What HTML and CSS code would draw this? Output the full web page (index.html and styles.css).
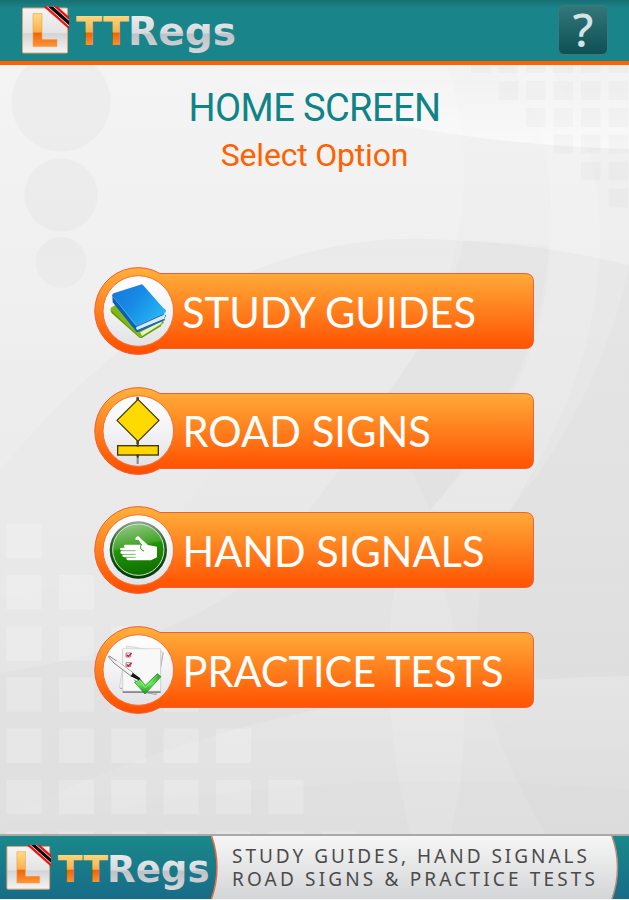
FILE: index.html
```html
<!DOCTYPE html>
<html lang="en">
  <head>
    <meta charset="utf-8">
    <title>TTRegs</title>
    <link rel="stylesheet" href="styles.css">
  </head>
  <body>
    <!-- shared gradients and symbols -->
    <svg class="defs" width="0" height="0">
      <defs>
        <linearGradient id="gold" gradientUnits="userSpaceOnUse" x1="0" y1="8" x2="0" y2="39">
          <stop offset="0" stop-color="#fdd87f" />
          <stop offset="0.53" stop-color="#f9b04c" />
          <stop offset="0.57" stop-color="#ec6608" />
          <stop offset="1" stop-color="#ff9537" />
        </linearGradient>
        <linearGradient id="silver" gradientUnits="userSpaceOnUse" x1="0" y1="8" x2="0" y2="46">
          <stop offset="0" stop-color="#e9ebed" />
          <stop offset="0.45" stop-color="#d8dadd" />
          <stop offset="0.5" stop-color="#bfc2c7" />
          <stop offset="1" stop-color="#d6d7da" />
        </linearGradient>
        <linearGradient id="plate" x1="0" y1="0" x2="0" y2="1">
          <stop offset="0" stop-color="#f4f4f4" />
          <stop offset="0.55" stop-color="#e4e4e4" />
          <stop offset="0.57" stop-color="#d3d4d6" />
          <stop offset="1" stop-color="#f4f4f4" />
        </linearGradient>
        <linearGradient id="orange" x1="0" y1="0" x2="0" y2="1">
          <stop offset="0" stop-color="#ffb03a" />
          <stop offset="0.15" stop-color="#ffa233" />
          <stop offset="0.85" stop-color="#ff5a06" />
          <stop offset="1" stop-color="#ff4e00" />
        </linearGradient>
        <linearGradient id="disc" x1="0" y1="0" x2="0" y2="1">
          <stop offset="0" stop-color="#ffffff" />
          <stop offset="0.5" stop-color="#f3f3f5" />
          <stop offset="1" stop-color="#e2e2e4" />
        </linearGradient>
        <linearGradient id="cover" x1="0" y1="0" x2="1" y2="0.6">
          <stop offset="0" stop-color="#1577d8" />
          <stop offset="0.5" stop-color="#188be6" />
          <stop offset="1" stop-color="#25b5f2" />
        </linearGradient>
        <linearGradient id="green" x1="0" y1="0" x2="0.2" y2="1">
          <stop offset="0" stop-color="#9fcc92" />
          <stop offset="0.48" stop-color="#43a42a" />
          <stop offset="0.52" stop-color="#219306" />
          <stop offset="1" stop-color="#117200" />
        </linearGradient>
        <linearGradient id="rim" x1="0" y1="0" x2="0" y2="1">
          <stop offset="0" stop-color="#8fa892" />
          <stop offset="0.4" stop-color="#1d5a24" />
          <stop offset="1" stop-color="#003d05" />
        </linearGradient>
        <linearGradient id="tick" x1="0" y1="0" x2="0" y2="1">
          <stop offset="0" stop-color="#1d9c1d" />
          <stop offset="0.5" stop-color="#6ae45c" />
          <stop offset="1" stop-color="#17931a" />
        </linearGradient>
        <linearGradient id="shine" x1="0" y1="0" x2="0" y2="1">
          <stop offset="0" stop-color="#fff" stop-opacity="0" />
          <stop offset="1" stop-color="#fff" stop-opacity="0.6" />
        </linearGradient>
        <linearGradient id="dome" x1="0" y1="0" x2="0" y2="1">
          <stop offset="0" stop-color="#000" stop-opacity="0.024" />
          <stop offset="1" stop-color="#000" stop-opacity="0" />
        </linearGradient>
        <linearGradient id="sweep" x1="0" y1="0" x2="0" y2="1">
          <stop offset="0" stop-color="#fff" stop-opacity="0.2" />
          <stop offset="1" stop-color="#fff" stop-opacity="0" />
        </linearGradient>
        <linearGradient id="teal" x1="0" y1="0" x2="0" y2="1">
          <stop offset="0" stop-color="#1a888a" />
          <stop offset="1" stop-color="#176c88" />
        </linearGradient>
        <linearGradient id="panel" x1="0" y1="0" x2="0" y2="1">
          <stop offset="0" stop-color="#f6f6f6" />
          <stop offset="1" stop-color="#d4d5d7" />
        </linearGradient>
        <clipPath id="plate-clip"><rect x="0" y="-1" width="47" height="47" /></clipPath>
      </defs>
      <symbol id="logo" viewBox="-1 -7.5 216 61" overflow="visible">
        <rect x="0.5" y="0.5" width="45" height="45" rx="1" fill="url(#plate)" stroke="#dda36f" />
        <path d="M11 6h9v26h15v7h-24z" fill="url(#gold)" stroke="#f6a04a" stroke-width="0.6" />
        <g clip-path="url(#plate-clip)">
          <path d="M25 -4L52 20" stroke="#f01010" stroke-width="9.4" />
          <path d="M25 -4L52 20" stroke="#fff" stroke-width="4.6" />
          <path d="M25 -4L52 20" stroke="#080808" stroke-width="3.4" />
        </g>
        <text class="logo-text" x="54" y="37.5" textLength="53" lengthAdjust="spacingAndGlyphs" fill="url(#gold)">TT</text>
        <text class="logo-text" x="106" y="37.5" textLength="108" lengthAdjust="spacingAndGlyphs" fill="url(#silver)">Regs</text>
      </symbol>
      <symbol id="button-shape" viewBox="0 0 440 88">
        <path d="M66 6.500H431q8.500 0 8.500 8.500V73q0 8.500-8.500 8.500H66A43.400 43.400 0 1 1 66 6.500z" fill="url(#orange)" stroke="#ee6038" />
        <circle cx="44.300" cy="44" r="35.300" fill="url(#disc)" stroke="#f4703a" />
      </symbol>
    </svg>

    <header class="topbar">
      <svg class="topbar-logo" width="216" height="61"><use href="#logo" /></svg>
      <a class="help" href="#">?</a>
    </header>

    <main class="home">
      <svg class="backdrop" viewBox="0 65 629 769" width="629" height="769">
        <!-- large curves -->
        <path d="M0 65H448Q465 120 464 180Q460 300 388 392Q320 510 240 588Q150 650 0 673z" fill="#fff" opacity="0.16" />
        <path d="M0 243Q75 250 120 275Q200 290 240 400Q200 560 0 600z" fill="#fff" opacity="0.05" />
        <path d="M205 65C300 108 440 144 629 149V65z" fill="url(#shine)" />
        <path d="M512 65Q555 145 550 220Q550 370 430 510H510Q600 370 600 240Q600 140 548 65z" fill="#fff" opacity="0.16" />
        <path d="M0 470Q200 230 430 239Q540 243 629 265V620H0z" fill="url(#dome)" />
        <path d="M464 240Q445 320 388 392Q400 450 430 510Q510 430 540 320Q550 280 549 245z" fill="#000" opacity="0.012" />
        <path d="M415 510Q365 640 410 834H450Q490 680 415 510z" fill="#fff" opacity="0.12" />
        <path d="M510 510Q430 640 545 834H629V265Q600 400 510 510z" fill="#000" opacity="0.01" />
        <path d="M0 820C180 730 380 680 629 676V790Q300 760 0 834z" fill="url(#sweep)" />
        <!-- circles -->
        <g fill="#000" opacity="0.02">
          <circle cx="61" cy="102" r="49.500" />
          <circle cx="61" cy="195" r="36.500" />
          <circle cx="61" cy="262.500" r="25.500" />
        </g>
        <!-- squares, top right -->
        <g fill="none" stroke="#000" stroke-opacity="0.018" stroke-width="19" stroke-dasharray="19.500 8">
          <path d="M471 63.500H629" />
          <path d="M498.500 90.500H629" />
          <path d="M526 117.500H629" />
          <path d="M553.500 144H629" />
          <path d="M581 171H629" />
          <path d="M608.500 198H629" />
        </g>
        <!-- squares, bottom left -->
        <g fill="none" stroke="#fff" stroke-opacity="0.21" stroke-width="34.500" stroke-dasharray="35 17.400">
          <path d="M6.500 541H42" />
          <path d="M6.500 592.200H94" />
          <path d="M6.500 643.400H146" />
          <path d="M6.500 694.600H199" />
          <path d="M6.500 745.800H251" />
          <path d="M6.500 797H304" />
          <path d="M6.500 848.700H356" />
        </g>
      </svg>

      <h1>HOME SCREEN</h1>
      <h2>Select Option</h2>

      <nav class="menu">
        <a href="#">
          <svg width="440" height="88">
            <use href="#button-shape" />
            <g transform="translate(-9 -6.700) scale(0.3333)">
              <path d="M78 142q-4 7 2 17l84 74q6 1 9-2l64-43-6-16-60-50-70 6z" fill="#83b616" />
              <path d="M78 150l82 76 6 8-84-75z" fill="#5f960a" />
              <path d="M166 216l64-34-1 8-58 37z" fill="#e8f3c3" />
              <path d="M164 233l64-40 1 4-59 36z" fill="#5f960a" />
              <path d="M82 104l1 22 67 83q2 6 6 6l84-42 3-8-8-4 7-12-60-42z" fill="#0e5fb4" />
              <path d="M154 200l86-38v6l-3 8-80 33q-6-5-3-9z" fill="#dce9f3" />
              <path d="M155 211l83-36 3 4-82 37z" fill="#1269be" />
              <path d="M82 104q0-3 4-5l80-26q4-2 8 1l68 77q3 4-2 6l-84 38q-4 2-7-2z" fill="url(#cover)" />
              <path d="M84 109l68 84 5 2 83-37" fill="none" stroke="#54c2f4" stroke-width="2" />
            </g>
            <text class="label" x="88" y="60.700" textLength="294" lengthAdjust="spacingAndGlyphs">STUDY GUIDES</text>
          </svg>
        </a>
        <a href="#">
          <svg width="440" height="88">
            <use href="#button-shape" />
            <g transform="translate(-9 -6.300) scale(0.3333)">
              <path d="M158 48V250" stroke="#858585" stroke-width="6" />
              <path d="M158 180V232" stroke="#444" stroke-width="4" />
              <path d="M159 56l63 63-63 63-63-63z" fill="#ffda00" stroke="#40370b" stroke-width="4" stroke-linejoin="round" />
              <rect x="98" y="195" width="122" height="28" fill="#ffd500" stroke="#40370b" stroke-width="4" />
              <path d="M158 50v9M158 181v9M158 192v6M158 221v7" stroke="#454016" stroke-width="7" />
            </g>
            <text class="label" x="88.500" y="60.200" textLength="248.500" lengthAdjust="spacingAndGlyphs">ROAD SIGNS</text>
          </svg>
        </a>
        <a href="#">
          <svg width="440" height="88">
            <use href="#button-shape" />
            <g transform="translate(-9 -6.300) scale(0.3333)">
              <circle cx="160" cy="151" r="86" fill="url(#rim)" />
              <circle cx="160" cy="150" r="77" fill="url(#green)" stroke="#d3e4cf" stroke-width="3" />
              <path d="M151 120q0-10 9-10 4 1 6 6l23 20 27 5v32l-18 9h-69q-5-1-5-5t5-4h-11q-6-1-6-5t6-4h-6q-6-1-6-6t6-5h-1q-6-1-6-5t6-4h10q-4 0-4-5t5-4h50q-7-6-11-15z" fill="#fff" />
              <path d="M108 153h44M114 164h38M124 173h28" stroke="#3b9c25" stroke-width="2" />
              <path d="M169 134q-7 15 8 20" fill="none" stroke="#2d951a" stroke-width="3" />
            </g>
            <text class="label" x="88.500" y="60.700" textLength="302" lengthAdjust="spacingAndGlyphs">HAND SIGNALS</text>
          </svg>
        </a>
        <a href="#">
          <svg width="440" height="88">
            <use href="#button-shape" />
            <g transform="translate(-9 -5.300) scale(0.3333)">
              <path d="M126 78l110 18-22 127-109-19z" fill="#9a9a9a" />
              <path d="M125 76l109 18-22 125-109-18z" fill="#eee" stroke="#c9c9c9" stroke-width="2" />
              <path d="M113 88h114v129H113z" fill="#888" />
              <path d="M113 84h114v127H113z" fill="#f8f8f8" stroke="#cfcfcf" stroke-width="2" />
              <path d="M123 97h14v12h-14zM123 126h14v12h-14z" fill="#fff" stroke="#846" stroke-width="2" />
              <path d="M125 102l5 5 10-10M125 131l5 5 10-10" fill="none" stroke="#d01717" stroke-width="4" />
              <path d="M70 108q1-3 5-1l70 50-6 10-52-40z" fill="#efefef" stroke="#8a8a8a" stroke-width="3" />
              <path d="M94 122l46 35" stroke="#fff" stroke-width="4" />
              <path d="M144 157l21 15q4 5-1 8l-27-13z" fill="#151515" />
              <path d="M148 177l17 20 9-10" fill="none" stroke="#777" stroke-width="3" />
              <path d="M149 185l17-9 15 18 36-35 11 9-48 52z" fill="url(#tick)" stroke="#168d1b" stroke-width="2" stroke-linejoin="round" />
              <path d="M153 186l12-6 16 21 36-37" fill="none" stroke="#a5f399" stroke-width="2" />
            </g>
            <text class="label" x="88.500" y="60.700" textLength="321" lengthAdjust="spacingAndGlyphs">PRACTICE TESTS</text>
          </svg>
        </a>
      </nav>
    </main>

    <footer class="banner">
      <svg width="629" height="63" viewBox="0 0 629 63">
        <rect width="629" height="63" fill="url(#teal)" />
        <path d="M211 0Q223 31 211 63H611.500Q624 31 611.500 0z" fill="url(#panel)" />
        <path d="M211.500 0Q222.500 31 211.500 63" fill="none" stroke="#ec6a3a" stroke-width="1.500" />
        <path d="M612 0Q623 31 612 63" fill="none" stroke="#b98c78" stroke-width="1.500" />
        <use href="#logo" x="5.500" y="2.800" width="205" height="58" />
        <text class="banner-text" x="232" y="26.500" textLength="355">STUDY GUIDES, HAND SIGNALS</text>
        <text class="banner-text" x="232" y="50" textLength="363">ROAD SIGNS &amp; PRACTICE TESTS</text>
      </svg>
    </footer>
  </body>
</html>
```
FILE: styles.css
```css
body {
  margin: 0;
  width: 629px;
  height: 900px;
  overflow: hidden;
  display: flex;
  flex-direction: column;
  font-family: Roboto, sans-serif;
  background-color: #f4f4f4;
}

svg {
  display: block;
  overflow: visible;
}

.defs {
  position: absolute;
}

.topbar {
  box-sizing: border-box;
  height: 65px;
  padding: 0 21px;
  display: flex;
  justify-content: space-between;
  background: linear-gradient(#176f72, #19858a 8px);
  border-bottom: 4px solid #ff6100;
}

.logo-text {
  font-family: "DejaVu Sans", sans-serif;
  font-weight: bold;
  font-size: 39.5px;
}

.help {
  box-sizing: border-box;
  width: 50px;
  height: 50px;
  margin-top: 5px;
  border: 1px solid #347c80;
  border-radius: 6px;
  background: linear-gradient(#33777a, #0e5054);
  color: #d5e3e4;
  font-family: "Noto Sans", sans-serif;
  font-size: 46px;
  line-height: 46px;
  font-weight: 500;
  text-align: center;
  text-decoration: none;
}

.home {
  position: relative;
  box-sizing: border-box;
  height: 769px;
  padding-top: 20px;
  display: flex;
  flex-direction: column;
  align-items: center;
  background: linear-gradient(#f2f2f2, #eeeeee 25%, #e2e2e2 75%, #dfdfdf);
}

.backdrop {
  position: absolute;
  top: 0;
  left: 0;
  overflow: hidden;
}

h1,
h2,
.menu {
  position: relative;
}

h1 {
  margin: 0;
  font-size: 38px;
  line-height: 46px;
  font-weight: normal;
  letter-spacing: -0.6px;
  color: #0f8488;
}

h2 {
  margin: 2px 0 0;
  font-size: 32px;
  line-height: 44px;
  font-weight: normal;
  letter-spacing: -0.2px;
  color: #ff6100;
}

.menu {
  margin: 90px 1px 0 0;
  display: flex;
  flex-direction: column;
  gap: 31.5px;
}

.menu a {
  display: block;
}

.label {
  font-family: Lato, sans-serif;
  font-size: 43px;
  fill: #fff;
}

.banner {
  box-sizing: border-box;
  height: 66px;
  border-top: 2px solid #a9a9a9;
}

.banner-text {
  font-family: "Noto Sans", sans-serif;
  font-size: 19px;
  fill: #4b4b4b;
}
```
